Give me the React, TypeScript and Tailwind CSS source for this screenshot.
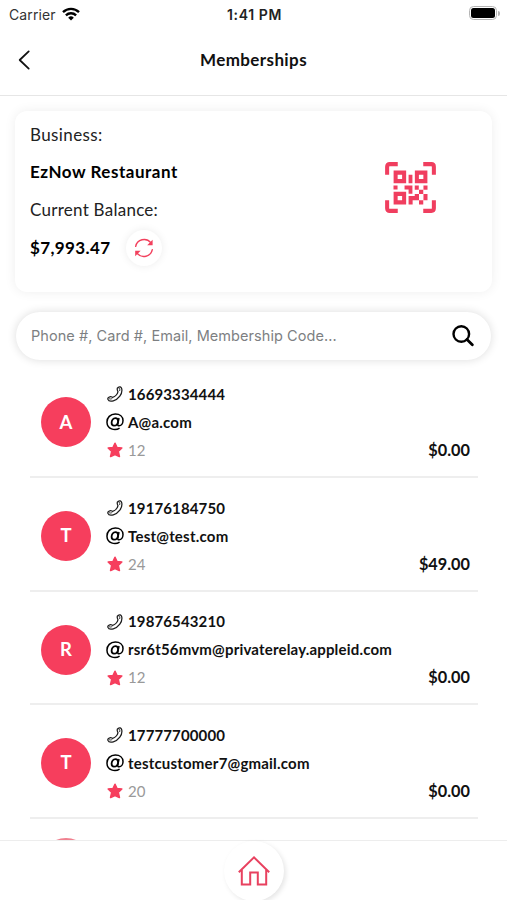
import React from "react";

interface Member {
  initial: string;
  phone: string;
  email: string;
  emailTracking: string;
  points: number;
  balance: string;
}

const members: Member[] = [
  {
    initial: "A",
    phone: "16693334444",
    email: "A@a.com",
    emailTracking: "tracking-[0.2px]",
    points: 12,
    balance: "$0.00",
  },
  {
    initial: "T",
    phone: "19176184750",
    email: "Test@test.com",
    emailTracking: "tracking-[0.22px]",
    points: 24,
    balance: "$49.00",
  },
  {
    initial: "R",
    phone: "19876543210",
    email: "rsr6t56mvm@privaterelay.appleid.com",
    emailTracking: "tracking-[0.18px]",
    points: 12,
    balance: "$0.00",
  },
  {
    initial: "T",
    phone: "17777700000",
    email: "testcustomer7@gmail.com",
    emailTracking: "tracking-[0.2px]",
    points: 20,
    balance: "$0.00",
  },
];

const WifiIcon = () => (
  <svg width="18" height="14" viewBox="0 0 18 14" fill="none" stroke="#000" strokeWidth="2.4">
    <path d="M1 5.1A11.6 11.6 0 0 1 17 5.1" />
    <path d="M3.9 8.3A7.4 7.4 0 0 1 14.1 8.3" />
    <path d="M9 13.6 6.2 10.7A4 4 0 0 1 11.8 10.7Z" fill="#000" stroke="none" />
  </svg>
);

const BackIcon = () => (
  <svg width="12" height="20" viewBox="0 0 12 20" fill="none" stroke="#111" strokeWidth="1.8">
    <path d="M10.7 1.4 1.7 10l9 8.6" strokeLinecap="round" strokeLinejoin="round" />
  </svg>
);

const RefreshIcon = () => (
  <svg width="20" height="20" viewBox="0 0 20 20" fill="none" stroke="#f2405d" strokeWidth="1.4">
    <path d="M1.7 8.3C3.2 1.4 12-1 16.8 4.6" strokeLinecap="round" />
    <path d="M18.3 11.7C16.8 18.6 8 21 3.2 15.4" strokeLinecap="round" />
    <path d="M18.6 1.8V7.2H13.2Z" fill="#f2405d" stroke="none" />
    <path d="M1.2 18.2V12.8H6.6Z" fill="#f2405d" stroke="none" />
  </svg>
);

const QrIcon = () => (
  <svg width="51" height="51" viewBox="0 0 12 12" fill="#f03e5f">
    <g fill="none" stroke="#f03e5f" strokeWidth="0.95">
      <path d="M.5 3V1.1Q.5.5 1.1.5H3M9 .5h1.9q.6 0 .6.6V3M11.5 9v1.9q0 .6-.6.6H9M3 11.5H1.1Q.5 11.5.5 10.9V9" />
      <path d="M2.5 2.5h2v2h-2ZM7.5 2.5h2v2h-2ZM2.5 7.5h2v2h-2Z" />
    </g>
    <path d="M5.55 3h.9v2h-.9ZM2 5.55h.95v.9H2ZM4.6 5.55h1.85v1.9h-.9v-1H4.6ZM7 5.55h.95v.95H7ZM9.05 5.55H10v.95h-.95ZM8 6.5h1v1H8ZM5.55 8H7v-.5h1V9H6.5v1h-.95ZM9.05 7.5H10V9h-.95ZM8 9h1v1H8Z" />
  </svg>
);

const SearchIcon = () => (
  <svg width="22" height="22" viewBox="0 0 22 22" fill="none" stroke="#000" strokeWidth="2.4">
    <circle cx="9.3" cy="9" r="7.8" />
    <path d="m15 14.6 5.3 5.2" strokeWidth="2.8" strokeLinecap="round" />
  </svg>
);

const PhoneIcon = () => (
  <svg width="16" height="16" viewBox="0 0 16 16" fill="none" stroke="#1c1c1c" strokeWidth="1.25">
    <path
      d="M10.9 1.5C12.7.3 14.1.7 14.7 2.7C15.9 7.9 11.3 13.5 6.3 14.8C3.6 15.5 1.5 15 .9 13.2C.5 11.9 1.6 11.2 2.9 10.8C4.3 10.4 4.8 11.1 5.6 11.3C8.1 10.7 10.6 8.1 11 5.7C10.8 4.9 10.2 4.4 10.2 3.1C10.2 2.3 10.4 1.8 10.9 1.5Z"
      strokeLinejoin="round"
    />
    <path d="M11.2 1.6C12.6 2.1 13.2 3.3 12.6 5M1.5 12C2.7 13.3 4.2 13.3 5.4 12.2" strokeWidth="0.9" />
  </svg>
);

const AtIcon = () => (
  <svg width="18" height="18" viewBox="0 0 18 18" fill="none" stroke="#000">
    <path
      d="M13.6 15.2C8.6 18.3 1.2 15.8 1 9.4C.8 4.6 4.4 1 9.3 1C13.8 1 17 3.6 17 7.6C17 10.5 15.2 12.8 13.1 12.8C11.9 12.8 11.5 12 11.8 10.8L13 5"
      strokeWidth="1.5"
    />
    <path d="M12.1 8.2C12.1 6.3 11.1 5.2 9.4 5.2C7.2 5.2 5.6 7.1 5.6 9.8C5.6 11.6 6.5 12.7 8 12.7C10.2 12.7 11.9 10.8 12.1 8.2Z" strokeWidth="1.8" />
  </svg>
);

const StarIcon = () => (
  <svg width="16" height="16" viewBox="0 0 16 16" fill="#f63e5d" stroke="#f63e5d" strokeWidth="1.6">
    <path d="m8 1.3 2 4.2 4.8.5-3.6 3.3 1.2 5.1L8 12.4l-4.4 2 1.2-5.1L1.2 6l4.8-.5Z" strokeLinejoin="round" />
  </svg>
);

const HomeIcon = () => (
  <svg width="34" height="32" viewBox="0 0 34 32" fill="none" stroke="#e8415f" strokeWidth="2">
    <path d="m1.8 17.3 15.2-15 15.2 15" />
    <path d="M4.8 15v14.4h8.4v-12h7.6v12h8.4V15" />
  </svg>
);

const StatusBar: React.FC = () => (
  <div className="flex h-7 shrink-0 items-center justify-between pl-[9px] pr-[7px] font-['Inter',sans-serif] text-[14px]">
    <div className="flex w-[120px] items-center gap-[6px] text-[#333]">
      <span className="tracking-[0.1px]">Carrier</span>
      <WifiIcon />
    </div>
    <span className="text-[14px] font-semibold tracking-[0.6px] text-[#222]">1:41 PM</span>
    <div className="flex w-[120px] items-center justify-end gap-px pb-[2px]">
      <div className="h-[14px] w-[28px] rounded-[4.5px] border-[1.5px] border-[#b5b5b5] p-[1px]">
        <div className="h-full w-full rounded-[2.5px] bg-black" />
      </div>
      <div className="h-[5px] w-[2px] rounded-r-full bg-[#b5b5b5]" />
    </div>
  </div>
);

const BusinessCard: React.FC = () => (
  <div className="mx-[15px] mt-[15px] flex h-[181px] shrink-0 items-start justify-between rounded-[12px] bg-white pl-[15px] pr-[56px] shadow-[0_0_12px_rgba(0,0,0,0.07)]">
    <div className="flex flex-col pt-[5px] text-[17px] text-[#222]">
      <span className="h-[37.5px] leading-[37px] tracking-[0.4px]">Business:</span>
      <span className="h-[37.5px] font-bold leading-[36px] tracking-[0.53px] text-black">
        EzNow Restaurant
      </span>
      <span className="h-[37.5px] leading-[37px] tracking-[0.26px]">Current Balance:</span>
      <div className="flex h-[39px] items-center gap-[16px]">
        <span className="font-bold tracking-[0.38px] text-black">$7,993.47</span>
        <button className="flex h-9 w-9 items-center justify-center rounded-full bg-white shadow-[0_0_8px_rgba(0,0,0,0.08)]">
          <RefreshIcon />
        </button>
      </div>
    </div>
    <div className="pt-[51px]">
      <QrIcon />
    </div>
  </div>
);

const MemberRow: React.FC<{ member: Member }> = ({ member }) => (
  <div className="ml-[30px] mr-[29px] flex h-[113.6px] shrink-0 items-end border-b-2 border-[#eeeeee] pb-[11.5px] pl-[11px] pr-[8px]">
    <div className="mb-[17px] flex h-[50px] w-[50px] items-center justify-center rounded-full bg-[#f63e5d] text-[18.5px] font-bold text-white">
      {member.initial}
    </div>
    <div className="ml-[15px] flex flex-1 flex-col text-[15px] font-bold text-[#111]">
      <div className="flex h-[28px] items-center">
        <span className="flex w-[22px] pl-px">
          <PhoneIcon />
        </span>
        <span className="tracking-[0.12px]">{member.phone}</span>
      </div>
      <div className="flex h-[28px] items-center">
        <span className="flex w-[22px]">
          <AtIcon />
        </span>
        <span className={member.emailTracking}>{member.email}</span>
      </div>
      <div className="flex h-[28px] items-center">
        <span className="flex w-[22px] pl-px">
          <StarIcon />
        </span>
        <span className="flex-1 text-[15px] font-normal text-[#999]">{member.points}</span>
        <span className="text-[16.3px]">{member.balance}</span>
      </div>
    </div>
  </div>
);

const App: React.FC = () => {
  return (
    <div className="flex h-[900px] w-[507px] flex-col overflow-hidden bg-white font-['Lato',sans-serif]">
      <StatusBar />
      <header className="flex h-[68px] shrink-0 items-center border-b border-[#e6e6e6] px-[18px] pb-[3px]">
        <BackIcon />
        <h1 className="flex-1 pr-3 text-center text-[17px] font-bold tracking-[0.4px] text-[#111]">
          Memberships
        </h1>
      </header>

      <main className="flex min-h-0 flex-1 flex-col overflow-hidden">
        <BusinessCard />
        <div className="mx-[16px] mt-[20px] flex h-[48px] shrink-0 items-center justify-between rounded-full bg-white pl-[15px] pr-[17px] shadow-[0_0_10px_rgba(0,0,0,0.14)]">
          <span className="font-['Inter',sans-serif] text-[14.5px] tracking-[0.06px] text-[#7d7f82]">
            Phone #, Card #, Email, Membership Code...
          </span>
          <SearchIcon />
        </div>
        <div className="flex flex-col pt-[4.4px]">
          {members.map((member) => (
            <MemberRow key={member.phone} member={member} />
          ))}
          <div className="ml-[41px] mt-[19px] h-[50px] w-[50px] shrink-0 rounded-full border-2 border-[#f0808f]" />
        </div>
      </main>

      <footer className="flex h-[60px] shrink-0 justify-center border-t border-[#ededed] bg-white">
        <div className="flex h-[60px] w-[60px] items-center justify-center rounded-full bg-white shadow-[2px_2px_5px_rgba(0,0,0,0.1)]">
          <HomeIcon />
        </div>
      </footer>
    </div>
  );
};

export default App;
